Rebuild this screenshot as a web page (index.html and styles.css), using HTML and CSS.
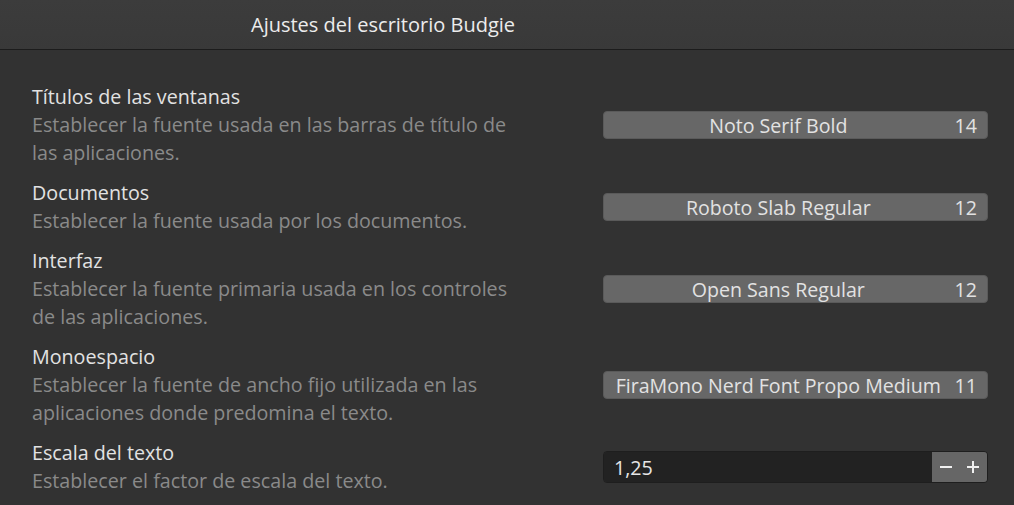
FILE: index.html
```html
<!DOCTYPE html>
<html lang="es">
<head>
    <meta charset="UTF-8">
    <meta name="viewport" content="width=device-width, initial-scale=1.0">
    <title>Ajustes del escritorio Budgie</title>
<link rel="stylesheet" href="styles.css">
</head>
<body>
    <div id="header">
        <h1>Ajustes del escritorio Budgie</h1>
    </div>
    <div id="content">
        <div class="row">
            <div class="info">
                <div class="label">Títulos de las ventanas</div>
                <div class="desc">Establecer la fuente usada en las barras de título de las aplicaciones.</div>
            </div>
            <button class="font-btn"><span class="name">Noto Serif Bold</span><span class="size">14</span></button>
        </div>
        <div class="row">
            <div class="info">
                <div class="label">Documentos</div>
                <div class="desc">Establecer la fuente usada por los documentos.</div>
            </div>
            <button class="font-btn"><span class="name">Roboto Slab Regular</span><span class="size">12</span></button>
        </div>
        <div class="row">
            <div class="info">
                <div class="label">Interfaz</div>
                <div class="desc">Establecer la fuente primaria usada en los controles de las aplicaciones.</div>
            </div>
            <button class="font-btn"><span class="name">Open Sans Regular</span><span class="size">12</span></button>
        </div>
        <div class="row">
            <div class="info">
                <div class="label">Monoespacio</div>
                <div class="desc">Establecer la fuente de ancho fijo utilizada en las aplicaciones donde predomina el texto.</div>
            </div>
            <button class="font-btn"><span class="name">FiraMono Nerd Font Propo Medium</span><span class="size">11</span></button>
        </div>
        <div class="row">
            <div class="info">
                <div class="label">Escala del texto</div>
                <div class="desc">Establecer el factor de escala del texto.</div>
            </div>
            <div class="spin">
                <input class="spin-value" type="text" value="1,25">
                <div class="spin-buttons">
                    <button title="Reducir">
                        <svg width="12" height="12" viewBox="0 0 12 12"><path d="M0 6h12" stroke="#f0f0f0" stroke-width="2"/></svg>
                    </button>
                    <button title="Aumentar">
                        <svg width="12" height="12" viewBox="0 0 12 12"><path d="M0 6h12M6 0v12" stroke="#f0f0f0" stroke-width="2"/></svg>
                    </button>
                </div>
            </div>
        </div>
    </div>
</body>
</html>
```

FILE: styles.css
```css
body {
    margin: 0;
    padding: 0;
    background-color: #323232;
    font-family: "Open Sans", "Noto Sans", sans-serif;
    color: #e4e4e4;
    height: 100vh;
    overflow: hidden;
}

#header {
    height: 50px;
    box-sizing: border-box;
    background: linear-gradient(#3c3c3c, #393939);
    border-bottom: 1px solid #1c1c1c;
    display: flex;
    align-items: center;
    padding-left: 251px;
}

#header h1 {
    margin: 0;
    font-size: 20px;
    font-weight: normal;
    color: #ececec;
}

#content {
    padding: 33px 26px 0 32px;
    display: flex;
    flex-direction: column;
    gap: 12px;
}

.row {
    display: flex;
    align-items: center;
    justify-content: space-between;
}

.info {
    width: 495px;
    font-size: 19.7px;
    line-height: 28px;
}

.label {
    color: #e2e2e2;
}

.desc {
    color: #8a8a8a;
}

.font-btn {
    width: 385px;
    height: 28px;
    margin: 0;
    padding: 0 10px;
    box-sizing: border-box;
    display: flex;
    align-items: center;
    background-color: #676767;
    border: 1px solid #5a5a5a;
    border-radius: 4px;
    color: #e2e2e2;
    font-family: inherit;
    font-size: 19.6px;
}

.font-btn .name {
    flex: 1;
    text-align: center;
    white-space: nowrap;
}

.font-btn .size {
    margin-left: 12px;
}

.spin {
    width: 385px;
    height: 32px;
    display: flex;
    box-sizing: border-box;
    border: 1px solid #1e1e1e;
    border-radius: 4px;
    overflow: hidden;
}

.spin-value {
    flex: 1;
    min-width: 0;
    margin: 0;
    border: none;
    padding: 0 10px;
    background-color: #222222;
    color: #e6e6e6;
    font-family: inherit;
    font-size: 19.7px;
    outline: none;
}

.spin-buttons {
    width: 55px;
    display: flex;
    background-color: #666666;
}

.spin-buttons button {
    flex: 1;
    margin: 0;
    padding: 0;
    border: none;
    background: none;
    display: flex;
    align-items: center;
    justify-content: center;
}
```
